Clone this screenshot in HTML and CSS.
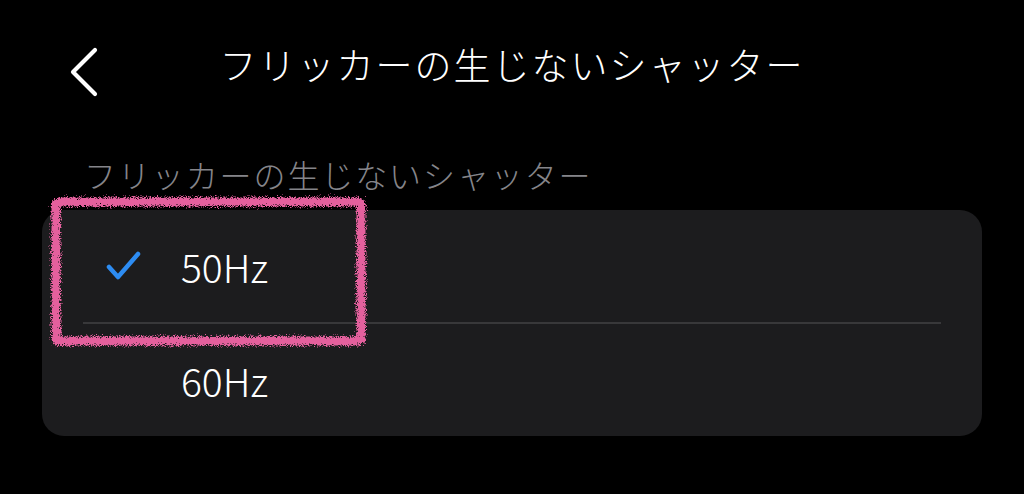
FILE: index.html
```html
<!DOCTYPE html>
<html lang="ja">
<head>
<meta charset="utf-8">
<link rel="stylesheet" href="styles.css">
</head>
<body>
<div class="screen">
  <header class="topbar">
    <div class="back">
      <svg width="40" height="52" viewBox="0 0 40 52"><path d="M31 4 L9 26 L31 48" fill="none" stroke="#fff" stroke-width="4.2" stroke-linecap="round" stroke-linejoin="round"/></svg>
    </div>
    <h1 class="title">フリッカーの生じないシャッター</h1>
    <div></div>
  </header>
  <div class="section-label">フリッカーの生じないシャッター</div>
  <div class="card">
    <div class="row selected">
      <span class="check">
        <svg width="38" height="34" viewBox="0 0 38 34"><path d="M4 18 L13 28 L33 5" fill="none" stroke="#2d8cf2" stroke-width="4.5" stroke-linecap="round" stroke-linejoin="round"/></svg>
      </span>
      <span class="value">50Hz</span>
    </div>
    <div class="divider"></div>
    <div class="row">
      <span class="check"></span>
      <span class="value">60Hz</span>
    </div>
  </div>
  <svg class="mark" width="333" height="167" viewBox="0 0 333 167">
    <defs>
      <filter id="rough" x="-10%" y="-10%" width="120%" height="120%">
        <feTurbulence type="fractalNoise" baseFrequency="1.1" numOctaves="3" seed="4" result="n"/>
        <feDisplacementMap in="SourceGraphic" in2="n" scale="9" xChannelSelector="R" yChannelSelector="G"/>
      </filter>
    </defs>
    <rect x="12" y="12" width="305" height="139" rx="3" fill="none" stroke="#e4619d" stroke-width="9" filter="url(#rough)"/>
  </svg>
</div>
</body>
</html>
```

FILE: styles.css
```css
* { box-sizing: border-box; }
html, body { margin: 0; padding: 0; background: #000; }
body {
  width: 1024px;
  height: 494px;
  overflow: hidden;
  font-family: "Noto Sans CJK JP", "Noto Sans", sans-serif;
  color: #fff;
}
.screen { position: relative; width: 1024px; height: 494px; }
.topbar {
  display: grid;
  grid-template-columns: 1fr auto 1fr;
  align-items: center;
  height: 140px;
  padding: 0 64px;
}
.back { display: flex; align-items: center; height: 52px; margin-top: 4px; }
.title {
  margin: 0;
  font-size: 37px;
  font-weight: 300;
  letter-spacing: 2px;
  line-height: 1;
  padding-bottom: 12px;
}
.section-label {
  padding-left: 84px;
  font-size: 32px;
  font-weight: 300;
  line-height: 40px;
  letter-spacing: 1.9px;
  color: #85858a;
  margin-top: 14px;
}
.card {
  margin: 16px 42px 0;
  background: #1c1c1e;
  border-radius: 22px;
  height: 226px;
  padding: 0 41px;
  display: flex;
  flex-direction: column;
}
.row {
  display: flex;
  align-items: center;
  height: 112px;
  padding-left: 22px;
}
.check { width: 76px; display: flex; align-items: center; }
.value { font-size: 39px; font-weight: 300; line-height: 1; letter-spacing: 0; }
.divider { height: 2px; background: #38383a; }
.mark { position: absolute; left: 44px; top: 190px; }
```
